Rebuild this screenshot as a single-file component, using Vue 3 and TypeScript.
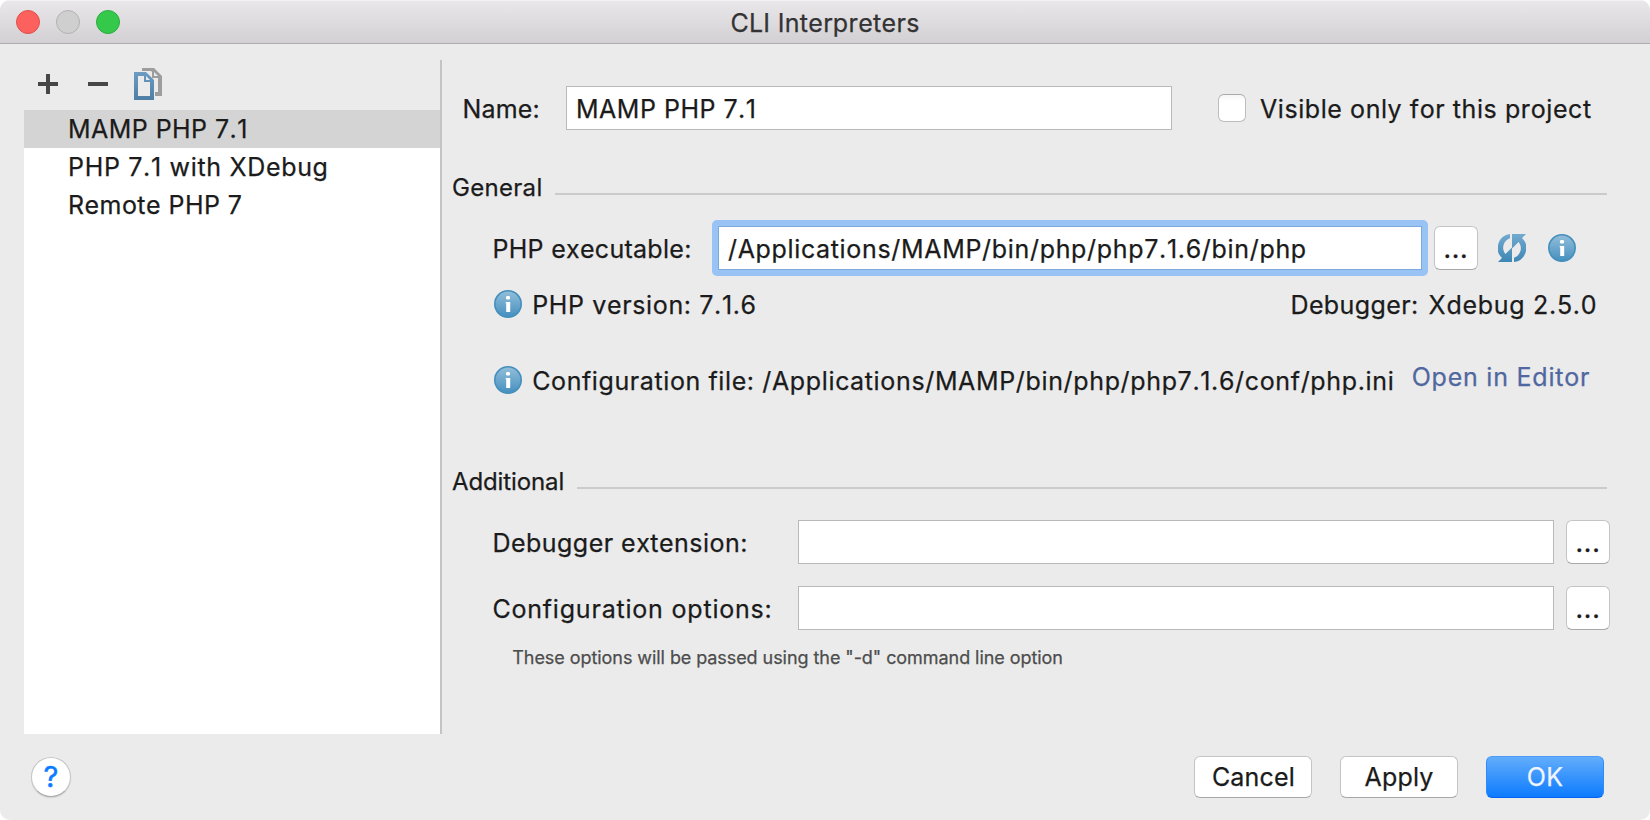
<script setup lang="ts">
import { ref } from 'vue'

interface Interpreter {
  id: string
  label: string
}

const interpreters: Interpreter[] = [
  { id: 'mamp', label: 'MAMP PHP 7.1' },
  { id: 'xdebug', label: 'PHP 7.1 with XDebug' },
  { id: 'remote', label: 'Remote PHP 7' },
]

const selected = ref('mamp')
const name = ref('MAMP PHP 7.1')
const executable = ref('/Applications/MAMP/bin/php/php7.1.6/bin/php')
const extension = ref('')
const options = ref('')
const projectOnly = ref(false)
</script>

<template>
  <div class="window">
    <!-- gradients shared by the icons -->
    <svg class="defs" width="0" height="0" aria-hidden="true">
      <defs>
        <linearGradient id="info-fill" x1="0" y1="0" x2="0" y2="1">
          <stop offset="0" stop-color="#93bfda" />
          <stop offset="1" stop-color="#458fbf" />
        </linearGradient>
        <linearGradient id="sync-fill" x1="0" y1="0" x2="0" y2="1">
          <stop offset="0" stop-color="#73aacf" />
          <stop offset="1" stop-color="#3d87b4" />
        </linearGradient>
        <linearGradient id="copy-fill" x1="0" y1="0" x2="0" y2="1">
          <stop offset="0" stop-color="#6d9cc3" />
          <stop offset="1" stop-color="#4f7fa5" />
        </linearGradient>
        <symbol id="info" viewBox="0 0 28 28">
          <circle cx="14" cy="14" r="13.2" fill="url(#info-fill)" stroke="#458fbc" stroke-width="1.6" />
          <rect x="12" y="6" width="4" height="3.6" rx="1.3" fill="#fff" />
          <path d="M11.7 12H16.2V22H12.2V13.2H11.7Z" fill="#fff" />
        </symbol>
      </defs>
    </svg>

    <header class="titlebar">
      <div class="lights">
        <i class="light close"></i>
        <i class="light minimize"></i>
        <i class="light zoom"></i>
      </div>
      <span class="title">CLI Interpreters</span>
    </header>

    <main class="content">
      <aside class="sidebar">
        <div class="toolbar">
          <svg class="tool" width="20" height="20" viewBox="0 0 20 20">
            <path d="M8 0H12V8H20V12H12V20H8V12H0V8H8Z" fill="#474747" />
          </svg>
          <svg class="tool" width="20" height="20" viewBox="0 0 20 20">
            <path d="M0 8H20V12H0Z" fill="#474747" />
          </svg>
          <svg class="copy" width="28" height="32" viewBox="0 0 28 32">
            <path fill-rule="evenodd" fill="#9d9d9d" d="M8 0H20L28 8V28H21V24H24V10H18V4L17 3H8ZM20 4V8H24Z" />
            <path fill-rule="evenodd" fill="url(#copy-fill)" d="M0 4H12L20 12V32H0ZM4 8V28H16V14H10V8ZM12 8V12H16Z" />
          </svg>
        </div>
        <ul class="list">
          <li
            v-for="item in interpreters"
            :key="item.id"
            :class="['item', item.id, { active: item.id === selected }]"
            @click="selected = item.id"
          >
            {{ item.label }}
          </li>
        </ul>
      </aside>

      <section class="details">
        <div class="row name-row">
          <label class="label name-label">Name:</label>
          <input v-model="name" class="field name-field" type="text" />
          <button
            class="checkbox"
            type="button"
            role="checkbox"
            :aria-checked="projectOnly"
            @click="projectOnly = !projectOnly"
          ></button>
          <span class="label visible-label">Visible only for this project</span>
        </div>

        <div class="heading general">
          <span>General</span>
          <i class="rule"></i>
        </div>

        <div class="row exec-row">
          <label class="label exec-label">PHP executable:</label>
          <div class="focus-ring">
            <input v-model="executable" class="field exec-field" type="text" />
          </div>
          <button class="more exec-more" type="button">...</button>
          <svg class="sync" width="28" height="28" viewBox="0 0 28 28">
            <g fill="url(#sync-fill)">
              <path d="M12 0A14 14 0 0 0 4 24L0 28H14V13.5L7.4 20A10 10 0 0 1 12 4.2Z" />
              <path d="M16 28A14 14 0 0 0 24 4L28 0H14V14.5L20.6 8A10 10 0 0 1 16 23.8Z" />
            </g>
          </svg>
          <svg class="icon" width="28" height="28"><use href="#info" /></svg>
        </div>

        <div class="status version-row">
          <svg class="icon" width="28" height="28"><use href="#info" /></svg>
          <span class="version">PHP version: 7.1.6</span>
          <span class="debugger">Debugger:</span>
          <span class="debugger-value">Xdebug 2.5.0</span>
        </div>

        <div class="status config-row">
          <svg class="icon" width="28" height="28"><use href="#info" /></svg>
          <span class="config"><span class="config-name">Configuration file: </span>/Applications/MAMP/bin/php/php7.1.6/conf/php.ini</span>
          <a class="link">Open in Editor</a>
        </div>

        <div class="heading additional">
          <span>Additional</span>
          <i class="rule"></i>
        </div>

        <div class="row extra-row">
          <label class="label ext-label">Debugger extension:</label>
          <input v-model="extension" class="field" type="text" />
          <button class="more" type="button">...</button>
        </div>
        <div class="row extra-row">
          <label class="label opt-label">Configuration options:</label>
          <input v-model="options" class="field" type="text" />
          <button class="more" type="button">...</button>
        </div>
        <p class="hint">These options will be passed using the "-d" command line option</p>
      </section>
    </main>

    <footer class="footer">
      <button class="help" type="button">?</button>
      <div class="actions">
        <button class="action cancel" type="button">Cancel</button>
        <button class="action apply" type="button">Apply</button>
        <button class="action ok" type="button">OK</button>
      </div>
    </footer>
  </div>
</template>

<style>
body {
  background: #fff;
}
</style>

<style scoped>
.window {
  display: flex;
  flex-direction: column;
  box-sizing: border-box;
  width: 1650px;
  height: 820px;
  overflow: hidden;
  border-radius: 10px;
  background: #ebebeb;
  color: #1b1b1b;
  font-family: Inter, "Liberation Sans", sans-serif;
  font-size: 25px;
  font-kerning: none;
  letter-spacing: 0.5px;
  line-height: 30px;
  white-space: nowrap;
  -webkit-text-stroke: 0.25px;
}

.window * {
  box-sizing: border-box;
}

.defs {
  position: absolute;
}

input,
button {
  margin: 0;
  padding: 0;
  border-radius: 0;
  outline: 0;
  color: inherit;
  font: inherit;
  font-kerning: none;
  letter-spacing: inherit;
}

svg {
  display: block;
  flex: none;
}

/* title bar */
.titlebar {
  display: grid;
  grid-template-columns: 1fr auto 1fr;
  align-items: center;
  flex: none;
  height: 44px;
  padding: 2px 0 1px;
  border-top: 1px solid #f4f3f4;
  border-bottom: 1px solid #adacad;
  background: linear-gradient(#e9e7e9, #d2d0d2);
}

.lights {
  display: flex;
  gap: 16px;
  padding-left: 16px;
}

.light {
  width: 24px;
  height: 24px;
  margin-top: -1px;
  border: 1px solid;
  border-radius: 50%;
}

.close {
  border-color: #e0504b;
  background: #fc615d;
}

.minimize {
  border-color: #b3b1b3;
  background: #d0cfd0;
}

.zoom {
  border-color: #2bac3d;
  background: #35c94b;
}

.title {
  color: #333;
  letter-spacing: 0.3px;
}

/* body */
.content {
  display: flex;
  flex: none;
  height: 690px;
  padding: 16px 0 0 24px;
}

.sidebar {
  display: flex;
  flex-direction: column;
  flex: none;
  width: 418px;
  border-right: 2px solid #c4c4c4;
}

.toolbar {
  display: flex;
  align-items: center;
  height: 50px;
  padding: 0 0 2px 14px;
}

.tool {
  margin-right: 30px;
}

.copy {
  margin-left: -4px;
}

.list {
  flex: 1;
  margin: 0;
  padding: 0;
  background: #fff;
  list-style: none;
}

.item {
  height: 38px;
  padding: 4px 0 4px 44px;
  letter-spacing: 0.45px;
}

.active {
  background: #d4d4d4;
}

.xdebug {
  letter-spacing: 0.68px;
}

.details {
  flex: 1;
  padding: 26px 42px 0 10px;
}

.row {
  display: flex;
  align-items: center;
  height: 44px;
}

.label {
  padding-top: 2px;
}

.field {
  flex: 1;
  min-width: 0;
  height: 44px;
  padding: 2px 9px 0;
  border: 1px solid #b9b9b9;
  background: #fff;
}

.name-row {
  padding-left: 10.5px;
}

.name-label {
  width: 103.5px;
  letter-spacing: 0.15px;
}

.name-field {
  flex: none;
  width: 606px;
}

.checkbox {
  flex: none;
  width: 28px;
  height: 28px;
  margin: 0 14px 0 46px;
  border: 1px solid #bdbdbd;
  border-top-color: #a9a9a9;
  border-radius: 6px;
  background: linear-gradient(#f6f6f6, #fff 25%);
}

.visible-label {
  letter-spacing: 0.57px;
}

.heading {
  display: flex;
  height: 30px;
  padding-top: 1px;
  font-size: 24px;
}

.general {
  margin-top: 42px;
  letter-spacing: 0.3px;
}

.additional {
  margin-top: 70px;
  letter-spacing: -0.12px;
}

.rule {
  flex: 1;
  height: 2px;
  margin: 20px 1px 0 12.5px;
  background: #cbcbcb;
}

.exec-row {
  margin-top: 24px;
  padding-left: 40.4px;
}

.exec-label {
  width: 219.6px;
  letter-spacing: 0.3px;
}

.focus-ring {
  display: flex;
  flex: none;
  width: 716px;
  height: 56px;
  padding: 6px;
  border-radius: 5px;
  background: #99c3f5;
}

.exec-field {
  border-color: #7ca8dc;
  letter-spacing: 0.68px;
}

.more {
  flex: none;
  width: 44px;
  height: 44px;
  margin-left: 12px;
  padding-top: 2px;
  border: 1px solid #c4c4c4;
  border-bottom-color: #a8a8a8;
  border-radius: 6px;
  background: #fff;
  font-weight: 500;
  letter-spacing: 0.7px;
}

.exec-more {
  margin-left: 6px;
}

.sync {
  margin: 0 22px 0 20px;
}

.status {
  display: flex;
  height: 30px;
  padding-left: 42px;
}

.status .icon {
  margin-right: 10.2px;
}

.version-row {
  margin-top: 20px;
}

.version {
  letter-spacing: 0.64px;
}

.debugger {
  margin-left: auto;
  letter-spacing: 0.4px;
}

.debugger-value {
  width: 179.4px;
  margin-left: 10px;
  letter-spacing: 0.72px;
}

.config-row {
  margin-top: 46px;
}

.config {
  letter-spacing: 0.65px;
}

.config-name {
  letter-spacing: 0.6px;
}

.link {
  width: 196.3px;
  margin: -4px 0 0 auto;
  color: #5067a0;
  letter-spacing: 0.77px;
}

.extra-row {
  margin-top: 24px;
  margin-right: -2px;
  padding-left: 40.4px;
}

.extra-row + .extra-row {
  margin-top: 22px;
}

.ext-label,
.opt-label {
  width: 305.6px;
}

.ext-label {
  letter-spacing: 0.48px;
}

.opt-label {
  letter-spacing: 0.8px;
}

.hint {
  margin: 13px 0 0 60.3px;
  color: #4d4d4d;
  font-size: 18px;
  letter-spacing: -0.06px;
}

/* footer */
.footer {
  display: flex;
  align-items: flex-start;
  justify-content: space-between;
  padding: 22px 46px 0 31px;
}

.help {
  width: 40px;
  height: 40px;
  margin-top: 1px;
  border: 1px solid #c6c6c6;
  border-bottom-color: #acacac;
  border-radius: 50%;
  background: #fff;
  box-shadow: 0 1px 1px rgba(0, 0, 0, 0.12);
  color: #0a7cff;
  font-size: 29px;
  letter-spacing: 0;
  -webkit-text-stroke: 0.5px;
}

.actions {
  display: flex;
  gap: 28px;
}

.action {
  width: 118px;
  height: 42px;
  border: 1px solid #c4c4c4;
  border-bottom-color: #a8a8a8;
  border-radius: 6px;
  background: #fff;
  letter-spacing: 0.2px;
}

.cancel {
  padding-left: 1px;
}

.ok {
  border-color: #4a9cf8 #2f8bfb #0663f2;
  background: linear-gradient(#62adfb, #0d7bff);
  color: #f0f5ff;
}
</style>
